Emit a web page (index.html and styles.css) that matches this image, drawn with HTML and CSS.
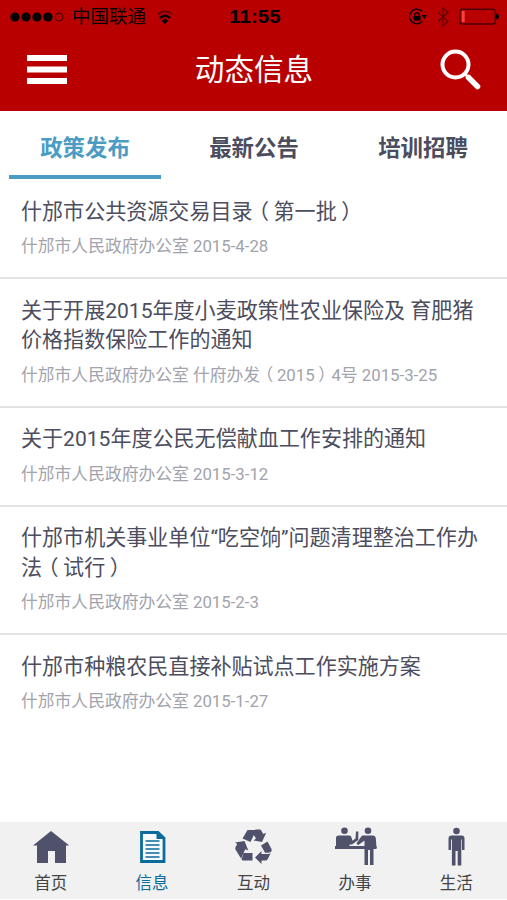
FILE: index.html
```html
<!DOCTYPE html>
<html lang="zh-CN">
<head>
<meta charset="utf-8">
<title>动态信息</title>
<link rel="stylesheet" href="styles.css">
</head>
<body>
<div class="app">
  <header class="header">
    <div class="status">
      <div class="carrier">
        <svg class="signal" viewBox="0 0 54 12"><circle cx="5" cy="6" r="4.6"/><circle cx="16" cy="6" r="4.6"/><circle cx="27" cy="6" r="4.6"/><circle cx="38" cy="6" r="4.6"/><circle class="empty" cx="49" cy="6" r="4"/></svg>
        <span>中国联通</span>
        <svg class="wifi" viewBox="0 0 18 16"><g fill="none" stroke="#000"><path d="M1.500 5.500Q9-1 16.500 5.500" stroke-width="1.800" opacity=".45"/><path d="M4 9Q9 4.500 14 9" stroke-width="2.400"/></g><path d="M9 9.500l3.300 2.300L9 15l-3.300-3.200z"/></svg>
      </div>
      <div class="time">11:55</div>
      <div class="indicators">
        <svg class="lock" viewBox="0 0 19 18"><path d="M14.300 3.800A7.300 7.300 0 1 0 14.300 13.200" fill="none" stroke="#000" stroke-width="1.200"/><path d="M13.500 7h5.500l-2.700 4z"/><path d="M5.500 8h7v4.500h-7z"/><path d="M6.800 8V6.800a2.200 2.200 0 0 1 4.400 0V8" fill="none" stroke="#000" stroke-width="1.200"/></svg>
        <svg class="bluetooth" viewBox="0 0 12 20"><path d="M1 5.500l10 9L6 19V1l5 4.500-10 9" fill="none" stroke="#000" stroke-width="1.300"/></svg>
        <svg class="battery" viewBox="0 0 40 18"><rect x=".8" y="1.200" width="35.500" height="14.800" rx="2.500" fill="none" stroke="#4c0000" stroke-width="1.500"/><rect x="2.700" y="3" width="3" height="11.200" fill="#ff4038"/><path d="M37 5.500q3 .5 3 3t-3 3z"/></svg>
      </div>
    </div>
    <div class="toolbar">
      <svg class="menu" viewBox="0 0 40 29"><path d="M0 0h40v6H0zM0 11.500h40v6H0zM0 23h40v6H0z"/></svg>
      <h1>动态信息</h1>
      <svg class="search" viewBox="0 0 41 41"><circle cx="15.500" cy="15.500" r="13"/><path d="M25 25l3 3" stroke-width="2.500"/><path d="M28.500 28.500l9 9" stroke-width="5.500"/></svg>
    </div>
  </header>
  <nav class="tabs">
    <a class="tab active">政策发布</a>
    <a class="tab">最新公告</a>
    <a class="tab">培训招聘</a>
  </nav>
  <main class="list">
    <article><h2>什邡市公共资源交易目录<span class="paren open">（</span>第一批<span class="paren close">）</span></h2><p>什邡市人民政府办公室 2015-4-28</p></article>
    <article><h2>关于开展2015年度小麦政策性农业保险及 育肥猪价格指数保险工作的通知</h2><p>什邡市人民政府办公室 什府办发<span class="paren open">（</span>2015<span class="paren close">）</span>4号 2015-3-25</p></article>
    <article><h2>关于2015年度公民无偿献血工作安排的通知</h2><p>什邡市人民政府办公室 2015-3-12</p></article>
    <article><h2>什邡市机关事业单位“吃空饷”问题清理整治工作办法<span class="paren open">（</span>试行<span class="paren close">）</span></h2><p>什邡市人民政府办公室 2015-2-3</p></article>
    <article><h2>什邡市种粮农民直接补贴试点工作实施方案</h2><p>什邡市人民政府办公室 2015-1-27</p></article>
  </main>
  <footer class="bottom">
    <a class="item"><svg viewBox="0 0 44 40"><path d="M22 4L40.300 18.500H37V36H26V24h-7v12H8V18.500H4z"/></svg><span>首页</span></a>
    <a class="item active"><svg viewBox="0 0 44 40"><path d="M11.500 5.500H28l6 5.500v23.500H11.500z" fill="#f8fbfd" stroke="#0b6c9c" stroke-width="2.800"/><path d="M26.500 4.500v7.500h8z"/><path d="M15.500 14h14M15.500 18h14M15.500 22h14M15.500 26h14M15.500 30h14" stroke="#0b6c9c" stroke-width="1.500"/></svg><span>信息</span></a>
    <a class="item"><svg viewBox="0 0 44 40"><path d="M11.500 11.500L16.500 3h8.700l-5.700 12z"/><path d="M24.500 2.500h4.300q1 0 1.600 1.200l1.800 3.300 3-1.200L31 15l-8.500-1.500 2.500-2L21.500 6z"/><path d="M4 15.500L13.500 14l3.800 9.500-3-1.300L10 31.500 4.500 22.500q-.6-1.200.1-2.500l1.600-3z"/><path d="M12.500 26h9v7.500H12q-1 0-1.500-1z"/><path d="M30 18.500l6.500-4 4 7.500q.8 1.700-.5 2.800-1 .9-3 .9h-3z"/><path d="M24 30.500l6.500-6.500v3H37q2 0 3-1.500l-3.200 6.500q-.7 1.500-2.300 1.500h-4V37z"/></svg><span>互动</span></a>
    <a class="item"><svg viewBox="0 0 44 40"><circle cx="11.500" cy="3.800" r="3.300"/><circle cx="35" cy="3.800" r="3.300"/><path d="M5.500 8.500h11q1.500 0 2 2l1 3.200 3-2.200.5-7h2.300v8.500L19 17.500h-2.500V19H3v-8q0-2.500 2.500-2.500zM2 19h41.500v3H2z"/><path d="M30 8.500h10q2.500 0 2.800 2.500l.7 10h-3v17H37V23h-2v15h-3.500V13.500L25 18.300l-1.500-2 5-7q.5-.8 1.500-.8z"/></svg><span>办事</span></a>
    <a class="item"><svg viewBox="0 0 44 40"><circle cx="22.500" cy="4" r="3.300"/><path d="M17.500 8.500h10q3 0 3 3V23H28V12.500h-.7V38.500h-3.600V24h-2.200v14.500h-3.600V12.500H17V23h-2.500V11.500q0-3 3-3z"/></svg><span>生活</span></a>
  </footer>
</div>
</body>
</html>
```
FILE: styles.css
```css
* { box-sizing: border-box; }
body { margin: 0; background: #fff; font-family: Roboto, "Noto Sans CJK SC", sans-serif; }
h1, h2, p { margin: 0; font-weight: 400; }
svg { display: block; flex: none; }
.app { width: 507px; height: 900px; display: flex; flex-direction: column; padding-bottom: 1px; }
.header { height: 110.5px; flex: none; background: #b80000; }
.status { height: 34px; display: grid; grid-template-columns: 1fr 60px 1fr; align-items: center; padding: 0 8px 0 10px; color: #000; }
.carrier { display: flex; align-items: center; font-size: 18.5px; line-height: 34px; }
.signal { width: 54px; height: 12px; margin-right: 8px; }
.signal .empty { fill: none; stroke: #000; stroke-width: .7; }
.wifi { width: 18px; height: 16px; margin-left: 10px; }
.time { text-align: center; font: 700 18px/34px "Liberation Sans", sans-serif; transform: scaleX(1.14); }
.indicators { display: flex; align-items: center; justify-content: flex-end; }
.lock { width: 19px; height: 18px; margin-right: 10px; }
.bluetooth { width: 12px; height: 20px; margin-right: 10px; opacity: .45; }
.battery { width: 40px; height: 18px; }
.toolbar { height: 71px; display: grid; grid-template-columns: 1fr auto 1fr; align-items: center; padding: 0 26px 0 27px; }
.toolbar h1 { color: #fff; font-size: 29.6px; line-height: 40px; }
.menu { width: 40px; height: 29px; fill: #fff; }
.search { width: 41px; height: 41px; justify-self: end; fill: none; stroke: #fff; stroke-width: 4; stroke-linecap: round; }
.tabs { height: 69.5px; flex: none; display: grid; grid-template-columns: repeat(3, 152px); justify-content: space-between; padding: 0 8px 0 9px; }
.tab { height: 68.5px; text-align: center; font-size: 22.4px; line-height: 74px; font-weight: 700; color: #4b4c5e; }
.tab.active { color: #4b9cc4; border-bottom: 4px solid #4b9cc4; }
.list { flex: 1; }
.list article { padding: 16.5px 20px 19px 21px; border-bottom: 2px solid #e2e2e2; }
.list article:last-child { border-bottom: 0; }
.list h2 { font-size: 21.05px; line-height: 29.2px; color: #4c4d5e; }
.list p { margin-top: 8.5px; font-size: 16.8px; line-height: 24px; color: #a2a3ac; }
.paren { display: inline-block; width: 1em; line-height: 1; white-space: nowrap; }
.paren.open { text-indent: -.22em; }
.paren.close { text-indent: .22em; }
.bottom { height: 77px; flex: none; display: grid; grid-template-columns: repeat(5, 1fr); background: #f1f1f1; }
.item { display: flex; flex-direction: column; align-items: center; padding-top: 5px; color: #444; font-size: 16.5px; line-height: 24px; }
.item svg { width: 44px; height: 40px; fill: #50516a; margin-bottom: 5px; }
.item.active { color: #0b6c9c; }
.item.active svg { fill: #0b6c9c; }
```
